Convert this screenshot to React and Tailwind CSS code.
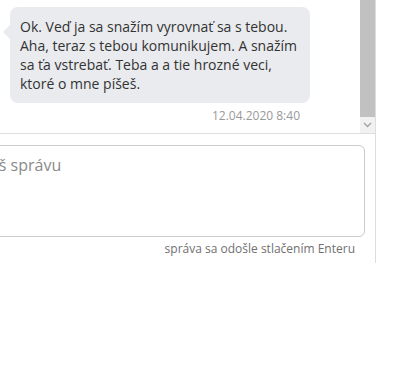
import React from "react";

const bubbleLines = [
  "Ok. Veď ja sa snažím vyrovnať sa s tebou.",
  "Aha, teraz s tebou komunikujem. A snažím",
  "sa ťa vstrebať. Teba a a tie hrozné veci,",
  "ktoré o mne píšeš.",
];

export default function App() {
  return (
    <div className="w-[400px] h-[391px] overflow-hidden bg-white font-['Open_Sans',sans-serif]">
      {/* chat panel, cropped on the left */}
      <div className="-ml-[60px] w-[436px] border-r border-[#dddddd] flex flex-col">
        {/* messages */}
        <div className="h-[134px] flex border-b border-[#dddddd]">
          <div className="flex-1 pl-[70px] pt-[7px]">
            <div className="relative w-[300px] rounded-lg bg-[#e9ebee] px-[10px] py-[10px] text-[14px] leading-[19px] text-[#333333]">
              <span className="absolute -left-[7px] top-[18px] w-0 h-0 border-y-[7px] border-y-transparent border-r-[7px] border-r-[#e9ebee]" />
              {bubbleLines.map((line) => (
                <div key={line} className="whitespace-nowrap">{line}</div>
              ))}
            </div>
            <div className="w-[300px] pr-[10px] pt-[5px] text-right text-[12px] leading-[16px] text-[#999999]">
              12.04.2020 8:40
            </div>
          </div>
          {/* scrollbar */}
          <div className="w-[15px] flex flex-col">
            <div className="flex-1 bg-[#c1c1c1]" />
            <div className="h-[16px] bg-[#f1f1f1] flex items-center justify-center">
              <svg width="9" height="6" viewBox="0 0 9 6" fill="none">
                <path d="M1 1l3.5 3.5L8 1" stroke="#a3a3a3" strokeWidth="1.4" />
              </svg>
            </div>
          </div>
        </div>
        {/* composer */}
        <div className="pt-[11px] pb-[6px] pr-[10px] pl-[12px] h-[129px]">
          <div className="h-[92px] rounded-md border border-[#cccccc] px-[11px] py-[9px] text-[16px] leading-[20px] text-[#8a8a8a] whitespace-nowrap">
            Napíš správu
          </div>
          <div className="pt-[4px] pr-[10px] text-right text-[12px] leading-[16px] text-[#707070]">
            správa sa odošle stlačením Enteru
          </div>
        </div>
      </div>
    </div>
  );
}
